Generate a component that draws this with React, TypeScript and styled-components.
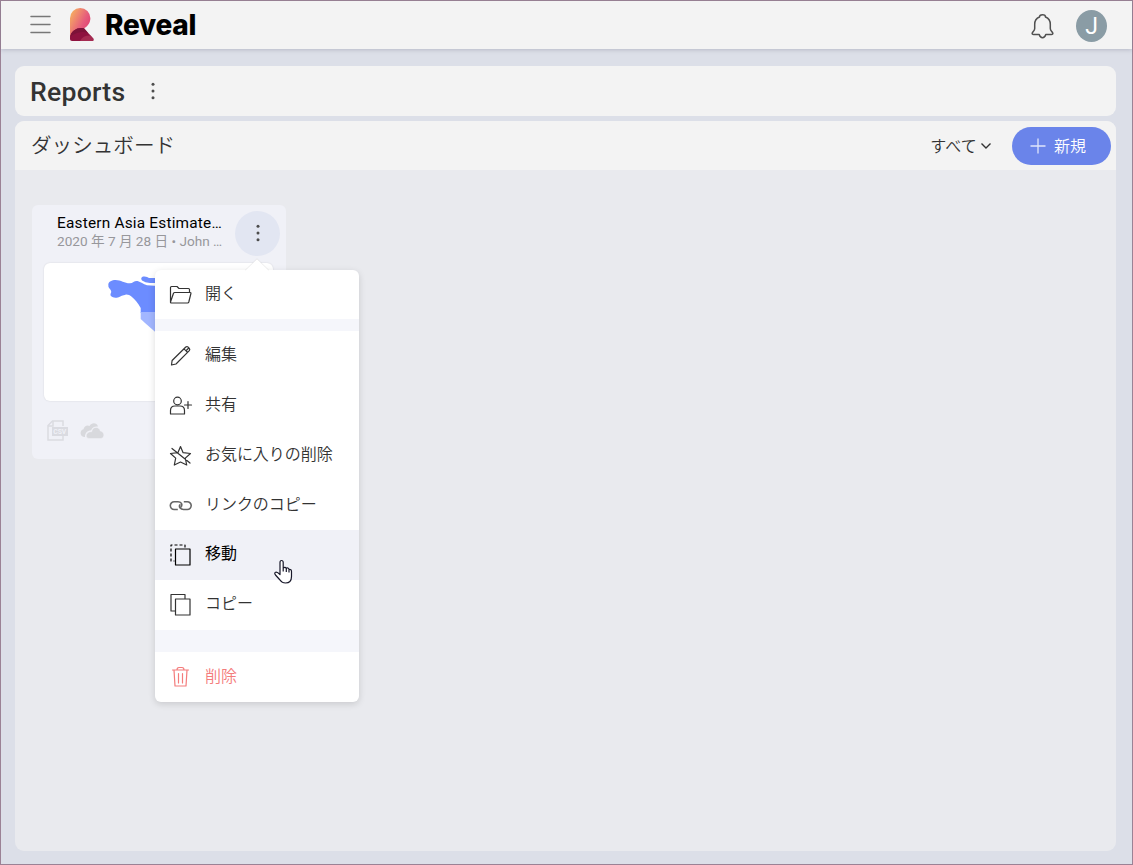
import React from "react";
import styled, { createGlobalStyle, css } from "styled-components";

const GlobalStyle = createGlobalStyle`
  * { box-sizing: border-box; }
  body { margin: 0; font-family: Roboto, "Noto Sans CJK JP", sans-serif; color: #333; }
  button { font: inherit; color: inherit; border: 0; padding: 0; background: none; }
  svg { display: block; flex: none; overflow: visible; }
`;

const Frame = styled.div`
  width: 1133px;
  height: 865px;
  border: 1px solid #9b8295;
  background: #dcdfe8;
  display: flex;
  flex-direction: column;
`;

const TopBar = styled.header`
  height: 48px;
  flex: none;
  display: flex;
  align-items: center;
  padding: 0 25px 0 28.5px;
  background: #f3f3f3;
  box-shadow: 0 1px 4px rgba(90, 90, 120, 0.28);
`;

const Brand = styled.div`
  display: flex;
  align-items: center;
  margin-left: 19.5px;
  gap: 11px;
`;

const BrandName = styled.span`
  font: 800 28px/32px Inter, sans-serif;
  letter-spacing: -0.3px;
  color: #000;
`;

const TopActions = styled.div`
  display: flex;
  align-items: center;
  gap: 22px;
  margin-left: auto;
  padding-top: 2px;
`;

const Avatar = styled.div`
  width: 31px;
  height: 32px;
  border-radius: 50%;
  background: #8a9ca5;
  color: #fff;
  font-size: 23px;
  line-height: 34px;
  text-align: center;
`;

const Main = styled.main`
  flex: 1;
  display: flex;
  flex-direction: column;
  gap: 5px;
  padding: 17px 16px 13px 14px;
`;

const TitlePanel = styled.section`
  height: 50px;
  flex: none;
  display: flex;
  align-items: center;
  gap: 26px;
  padding: 0 15px;
  border-radius: 9px;
  background: #f3f3f3;
`;

const PageTitle = styled.h1`
  margin: 0;
  padding-top: 2px;
  font-size: 26.6px;
  font-weight: 500;
  line-height: 32px;
  letter-spacing: 0.25px;
`;

const Panel = styled.section`
  flex: 1;
  display: flex;
  flex-direction: column;
  border-radius: 9px;
  background: #e9eaee;
`;

const PanelHeader = styled.div`
  height: 49px;
  flex: none;
  display: flex;
  align-items: center;
  padding: 0 5px 0 16px;
  border-radius: 9px 9px 0 0;
  background: #f3f3f3;
`;

const PanelTitle = styled.h2`
  margin: 0;
  font-size: 20.6px;
  font-weight: 350;
  line-height: 30px;
`;

const Filter = styled.button`
  display: flex;
  align-items: center;
  gap: 3px;
  margin-left: auto;
  padding-top: 2px;
  font-size: 16px;
  font-weight: 350;
  line-height: 24px;
  letter-spacing: 0.2px;
`;

const NewButton = styled.button`
  width: 99px;
  height: 38px;
  display: flex;
  align-items: center;
  gap: 8px;
  margin-left: 20px;
  padding: 2px 0 0 18px;
  border-radius: 19px;
  background: #6a84ea;
  color: #fff;
  font-size: 16px;
  font-weight: 350;
  line-height: 24px;
`;

const PanelBody = styled.div`
  padding: 35px 17px;
`;

const Card = styled.article`
  position: relative;
  width: 254px;
  height: 254px;
  border-radius: 6px;
  background: #f0f1f7;
  display: flex;
  flex-direction: column;
  padding: 6px 6px 0 12px;
`;

const CardHeader = styled.div`
  display: flex;
  justify-content: space-between;
  height: 45px;
`;

const CardText = styled.div`
  width: 167px;
  margin-left: 13px;
  padding-top: 2px;
`;

const CardTitle = styled.div`
  font-size: 15.4px;
  line-height: 20px;
  letter-spacing: 0.2px;
  color: #000;
  white-space: nowrap;
`;

const CardMeta = styled.div`
  font-size: 13.6px;
  line-height: 17px;
  color: #97979b;
  white-space: nowrap;
`;

const RoundButton = styled.button`
  width: 45px;
  height: 45px;
  display: grid;
  place-items: center;
  padding: 0 0 1px 0;
  border-radius: 50%;
  background: #e2e6f2;
`;

const Preview = styled.div`
  width: 229px;
  height: 138px;
  margin-top: 7px;
  border-radius: 6px;
  background: #fff;
  box-shadow: 0 0 2px rgba(0, 0, 0, 0.12);
  overflow: hidden;
`;

const CardFooter = styled.div`
  display: flex;
  align-items: center;
  gap: 12.5px;
  padding: 19px 0 0 2.5px;
`;

const Menu = styled.nav`
  position: absolute;
  left: 123px;
  top: 65px;
  width: 204px;
  border-radius: 6px;
  background: #fff;
  box-shadow: 0 2px 7px rgba(0, 0, 0, 0.14);
`;

const Pointer = styled.svg`
  position: absolute;
  left: 90px;
  top: -12px;
`;

type ItemProps = { $height?: number; $active?: boolean; $danger?: boolean };

const MenuItem = styled.div<ItemProps>`
  height: ${(p) => p.$height ?? 50}px;
  display: flex;
  align-items: center;
  gap: 12px;
  padding-left: 14px;
  font-size: 16px;
  font-weight: 350;
  line-height: 24px;
  letter-spacing: -0.05px;
  color: ${(p) => (p.$danger ? "#f47c7c" : "#333")};
  ${(p) =>
    p.$active &&
    css`
      background: #f0f1f7;
      color: #000;
      font-weight: 400;
    `}
`;

const MenuLabel = styled.span<{ $low?: boolean }>`
  margin-top: ${(p) => (p.$low ? "-1px" : "-3px")};
`;

const MenuGap = styled.div<{ $height: number }>`
  height: ${(p) => p.$height}px;
  background: #f5f6fb;
`;

const Cursor = styled.svg`
  position: absolute;
  left: 119px;
  top: 290px;
`;

const Dots = () => (
  <svg width="4" height="20" viewBox="0 0 4 20" fill="#4c4c4c">
    <circle cx="2" cy="3.2" r="1.5" />
    <circle cx="2" cy="10" r="1.5" />
    <circle cx="2" cy="16.8" r="1.5" />
  </svg>
);

const MenuIcon = ({ children }: { children: React.ReactNode }) => (
  <svg width="24" height="24" viewBox="0.5 0.5 24 24" fill="none" stroke="currentColor" strokeWidth="1.2" strokeLinejoin="round" strokeLinecap="round">
    {children}
  </svg>
);

const Logo = () => (
  <svg width="24" height="33" viewBox="0 0.8 24 33">
    <defs>
      <linearGradient id="logoTop" x1="0" y1="0.1" x2="0.9" y2="0.8">
        <stop offset="0" stopColor="#f8b55f" />
        <stop offset="0.65" stopColor="#e65c7c" />
        <stop offset="1" stopColor="#de3f70" />
      </linearGradient>
    </defs>
    <path d="M0 30V10A10.2 10.2 0 0 1 20.4 10C20.4 14 18 18 14 20L4 30Z" fill="url(#logoTop)" />
    <path d="M0 31V29C1 23 6 19.6 12 19.8L14 20L23 30Q24.5 32.7 22 32.7H2Q0 32.7 0 31Z" fill="#8e123f" />
    <path d="M0 29C1 23 6 19.6 12 19.8L14 20L18 24.7C12 22.5 4 25 0 29Z" fill="#7c1238" />
    <path d="M10 32.7C12 28.7 16 27 20.5 27.3L23 30Q24.5 32.7 22 32.7Z" fill="#a52b51" />
  </svg>
);

export default function App() {
  return (
    <>
      <GlobalStyle />
      <Frame>
        <TopBar>
          <svg width="21" height="18" viewBox="0 0.5 21 18" stroke="#777" strokeWidth="1.5" strokeLinecap="round">
            <path d="M1 1H20M1 9H20M1 17H20" />
          </svg>
          <Brand>
            <Logo />
            <BrandName>Reveal</BrandName>
          </Brand>
          <TopActions>
            <svg width="23" height="24" viewBox="0 -0.5 23 24" fill="none" stroke="#505050" strokeWidth="1.5" strokeLinejoin="round">
              <path d="M8.5 2.5A3 2.2 0 0 1 14.5 2.5C18 4 19.3 6.4 19.3 9.7V14C19.3 16 20.8 16.8 21.7 18.3C22.2 19.4 21.5 20 20.4 20H14.8C14 22.5 13 23.3 11.5 23.3S9 22.5 8.2 20H2.6C1.5 20 .8 19.4 1.3 18.3C2.2 16.8 3.7 16 3.7 14V9.7C3.7 6.4 5 4 8.5 2.5Z" />
            </svg>
            <Avatar>J</Avatar>
          </TopActions>
        </TopBar>
        <Main>
          <TitlePanel>
            <PageTitle>Reports</PageTitle>
            <Dots />
          </TitlePanel>
          <Panel>
            <PanelHeader>
              <PanelTitle>ダッシュボード</PanelTitle>
              <Filter>
                すべて
                <svg width="12" height="8" viewBox="0 1 12 8" fill="none" stroke="#333" strokeWidth="1.4">
                  <path d="M1.5 1.5L6 6L10.5 1.5" />
                </svg>
              </Filter>
              <NewButton>
                <svg width="16" height="16" viewBox="0 1 16 16" stroke="#dfe5fb" strokeWidth="1.3">
                  <path d="M8 0.5V15.5M0.5 8H15.5" />
                </svg>
                新規
              </NewButton>
            </PanelHeader>
            <PanelBody>
              <Card>
                <CardHeader>
                  <CardText>
                    <CardTitle>Eastern Asia Estimate…</CardTitle>
                    <CardMeta>2020 年 7 月 28 日 • John …</CardMeta>
                  </CardText>
                  <RoundButton>
                    <Dots />
                  </RoundButton>
                </CardHeader>
                <Preview>
                  <svg width="229" height="138" viewBox="0 0 229 138">
                    <path d="M64.3 21.5C64.5 18.5 68 17 71.500 17C77 17 81 20.500 86 20.300C89 20 90.500 17.500 93.500 18C97 19 99 21 103 22.300L114 23V50H96.700V45C94 40 91 36.500 87.700 33.700C85 31.500 82 31 80 32.300C77 32 76 34.700 72.700 34.700C69 34.700 66 33.500 66.500 31C68 28.500 67 27 65.500 25.500Q64 23.500 64.300 21.500Z" fill="#6c8cff" />
                    <path d="M99 13.500Q103 13 105 15L114 15V20H106Q101 19.500 98 17.500Q96 15 99 13.500Z" fill="#6c8cff" />
                    <path d="M96.7 49H114V71L111 68.700L101 60L96.700 56Z" fill="#a2b6ff" />
                  </svg>
                </Preview>
                <CardFooter>
                  <svg width="21" height="21" viewBox="0 0 21 21" fill="none" stroke="#dadbe1" strokeWidth="1.5">
                    <path d="M16 6V1H5.5L1 5.5V20H16V16" />
                    <path d="M6 1V6H1" />
                    <rect x="5" y="7" width="16" height="9" fill="#dadbe1" stroke="none" />
                    <text x="6.2" y="14" fontSize="6.8" fontWeight="700" fill="#f0f1f7" stroke="none">CSV</text>
                  </svg>
                  <svg width="24" height="16" viewBox="0 0 24 16" fill="#d8d9dd">
                    <path d="M5 14H4A4 4 0 0 1 3.5 6.2C4 3 7.500 1.500 9.500 3C11.500-.8 17-.5 18 3.500C14.500 3 12 4.700 11.200 7.300C7 7.500 5 10.500 5 14Z" />
                    <path d="M9 15.5C5 15.5 5 8.500 11.700 8.700C12.300 3 19.500 3.200 20.300 8C25 8.700 25 15.500 20.500 15.500Z" stroke="#f0f1f7" strokeWidth="0.5" />
                  </svg>
                </CardFooter>

                <Menu>
                  <Pointer width="24" height="13" viewBox="0 0 24 13">
                    <path d="M0 12.5L12 .8L24 12.5" fill="#fff" stroke="rgba(0,0,0,.08)" />
                    <path d="M0 13H24L23 12H1Z" fill="#fff" />
                  </Pointer>
                  <MenuItem $height={49}>
                    <MenuIcon>
                      <path d="M2 20V5Q2 4 3 4H8.500L10.500 6H20Q21 6 21 7V10M2 19.500L5 10.700Q5.400 10 6.200 10H21.700Q22.700 10 22.400 11L20.300 19.500Q20 20.500 19 20.500H3Q2 20.500 2 19.500Z" />
                    </MenuIcon>
                    <MenuLabel $low>開く</MenuLabel>
                  </MenuItem>
                  <MenuGap $height={12} />
                  <MenuItem>
                    <MenuIcon>
                      <path d="M3 21.500L3.600 17L17.300 3.500Q18.500 2.500 19.700 3.700L20.800 4.800Q21.800 6 20.800 7.200L7.500 20.500L3 21.500ZM15.500 5.300L19 8.800M17.500 7.200L20.500 4.300" />
                    </MenuIcon>
                    <MenuLabel>編集</MenuLabel>
                  </MenuItem>
                  <MenuItem>
                    <MenuIcon>
                      <circle cx="9" cy="7.5" r="3.8" />
                      <path d="M2 20.500V17Q2 12.500 6.500 12.500H11.500Q16 12.500 16 17V20.500ZM16 11.500H23M19.500 8V15" />
                    </MenuIcon>
                    <MenuLabel>共有</MenuLabel>
                  </MenuItem>
                  <MenuItem>
                    <MenuIcon>
                      <path d="M12 3L14.600 9.200L22 10L16.800 14.600L18.200 21.500L12 18.500L5.800 21.500L7.200 14.600L2 10L9.400 9.200ZM3.500 5L21.500 19.500" />
                    </MenuIcon>
                    <MenuLabel>お気に入りの削除</MenuLabel>
                  </MenuItem>
                  <MenuItem $height={49}>
                    <MenuIcon>
                      <path stroke="#666" strokeWidth="1.6" strokeLinecap="butt" d="M9.3 16H5.700A3.900 3.900 0 0 1 5.700 8.200H9.500C12.500 8.200 14 10.500 13 12.800Q12.700 13.300 12 13.600M15.300 8.200H18.800A3.900 3.900 0 0 1 18.800 16H15C12 16 10.300 13.700 11.200 11.700Q11.500 11.200 12 10.900" />
                    </MenuIcon>
                    <MenuLabel $low>リンクのコピー</MenuLabel>
                  </MenuItem>
                  <MenuItem $active>
                    <MenuIcon>
                      <path strokeLinecap="butt" strokeDasharray="3 2" d="M16.5 5V2.500H2.500V18.500H6" />
                      <rect x="7" y="6.5" width="14.5" height="16" />
                    </MenuIcon>
                    <MenuLabel>移動</MenuLabel>
                  </MenuItem>
                  <MenuItem>
                    <MenuIcon>
                      <path d="M16.5 6V2H2.500V18.500H7" />
                      <rect x="7" y="6.500" width="14.5" height="16" />
                    </MenuIcon>
                    <MenuLabel>コピー</MenuLabel>
                  </MenuItem>
                  <MenuGap $height={22} />
                  <MenuItem $danger>
                    <MenuIcon>
                      <path d="M4 5.500H20M8.500 5.500Q8.500 3 10.500 3H13.500Q15.500 3 15.500 5.500M5.500 5.500L6.500 21.500H17.500L18.500 5.500M10 9V18.500M14 9V18.500" />
                    </MenuIcon>
                    <MenuLabel $low>削除</MenuLabel>
                  </MenuItem>
                  <Cursor width="19" height="25" viewBox="0.5 0.5 19 25">
                    <path d="M6.500 14V3Q6.500 1 8 1Q9.700 1 9.700 3V8.500Q11.500 7 12.800 8.800Q14.500 7.800 15.500 9.800Q18 9.500 18 12V17Q18 23.500 12 23.500Q8.500 23.500 6.500 20.500L2 15.500Q.5 13.500 2 12.800Q3.500 12 6.500 15ZM9.700 8.500V12M12.800 9V12.500M15.500 10V13" fill="#fff" stroke="#171729" strokeWidth="1.2" strokeLinejoin="round" />
                  </Cursor>
                </Menu>
              </Card>
            </PanelBody>
          </Panel>
        </Main>
      </Frame>
    </>
  );
}
